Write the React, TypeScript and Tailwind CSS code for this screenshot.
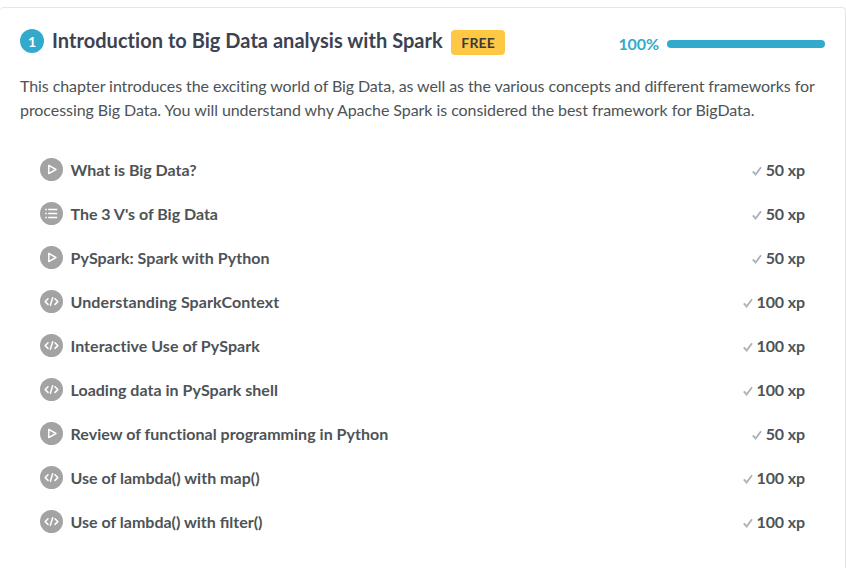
type Kind = 'play' | 'list' | 'code';

const exercises: { kind: Kind; title: string; xp: number; tracking: string }[] = [
  { kind: 'play', title: 'What is Big Data?', xp: 50, tracking: 'tracking-[-0.02px]' },
  { kind: 'list', title: "The 3 V's of Big Data", xp: 50, tracking: 'tracking-[-0.02px]' },
  { kind: 'play', title: 'PySpark: Spark with Python', xp: 50, tracking: 'tracking-[0.05px]' },
  { kind: 'code', title: 'Understanding SparkContext', xp: 100, tracking: 'tracking-[0.11px]' },
  { kind: 'code', title: 'Interactive Use of PySpark', xp: 100, tracking: 'tracking-[0.04px]' },
  { kind: 'code', title: 'Loading data in PySpark shell', xp: 100, tracking: 'tracking-[0.02px]' },
  { kind: 'play', title: 'Review of functional programming in Python', xp: 50, tracking: 'tracking-[0.03px]' },
  { kind: 'code', title: 'Use of lambda() with map()', xp: 100, tracking: 'tracking-[0.02px]' },
  { kind: 'code', title: 'Use of lambda() with filter()', xp: 100, tracking: 'tracking-normal' },
];

function KindIcon({ kind }: { kind: Kind }) {
  return (
    <svg className="mb-0.5 size-[23px] shrink-0" viewBox="0 0 23 23" fill="none" stroke="#fff">
      <circle cx="11.5" cy="11.5" r="11.5" fill="#a3a3a3" stroke="none" />
      {kind === 'play' && <path d="M8.8 7.4v8.2l7.1-4.1z" strokeWidth="1.5" strokeLinejoin="round" />}
      {kind === 'list' && (
        <path d="M8.2 7.5h9M8.2 11.5h9M8.2 15.5h9M5.2 7.5h1.6M5.2 11.5h1.6M5.2 15.5h1.6" strokeWidth="1.3" />
      )}
      {kind === 'code' && (
        <path d="M8 8.8l-2.8 2.8L8 14.4M15 8.8l2.8 2.8-2.8 2.8M12.7 7.7l-2.4 7.6" strokeWidth="1.5" strokeLinecap="round" strokeLinejoin="round" />
      )}
    </svg>
  );
}

export default function App() {
  return (
    <main className="h-[568px] w-[846px] overflow-hidden bg-white pt-[7px] font-['Lato',sans-serif] text-[#4d5356]">
      <section className="h-[600px] rounded-t-[4px] border-t border-r border-[#e6e6e6] pr-5 pl-5">
        <header className="flex h-[66px] items-center">
          <span className="flex size-6 items-center justify-center rounded-full bg-[#33aacc] text-[14px] font-bold text-white">1</span>
          <h1 className="mb-0.5 ml-2 text-[20px] font-bold tracking-[0.035px] whitespace-nowrap text-[#3d4251]">Introduction to Big Data analysis with Spark</h1>
          <span className="mt-0.5 ml-[8.4px] flex h-[25px] w-[54px] items-center justify-center rounded-[4px] bg-[#ffc844] text-[14px] font-bold tracking-[0.15px] text-[#3a3a3a]">FREE</span>
          <span className="mt-[6px] ml-auto text-[16px] font-bold tracking-[-0.1px] text-[#33aacc]">100%</span>
          <span className="mt-[6px] ml-2 h-2 w-[158px] rounded-full bg-[#33aacc]" />
        </header>
        <p className="text-[16px] leading-6 whitespace-nowrap">
          <span className="tracking-[-0.084px]">
            This chapter introduces the exciting world of Big Data, as well as the various concepts and different frameworks for
          </span>
          <br />
          <span className="tracking-[-0.062px]">
            processing Big Data. You will understand why Apache Spark is considered the best framework for BigData.
          </span>
        </p>
        <ul className="mt-[26px] pr-5 pl-5">
          {exercises.map((e) => (
            <li key={e.title} className="flex h-11 items-center text-[16px] font-bold">
              <KindIcon kind={e.kind} />
              <span className={`ml-[7.5px] ${e.tracking}`}>{e.title}</span>
              <svg className="mt-0.5 mr-[3.8px] ml-auto h-2.5 w-2.5" viewBox="0 0 10 10" fill="none" stroke="#adb2ba" strokeWidth="1.9">
                <path d="M.8 5.3l2.8 3.2L9 1.2" />
              </svg>
              <span className="tracking-[-0.12px]">{e.xp} xp</span>
            </li>
          ))}
        </ul>
      </section>
    </main>
  );
}
